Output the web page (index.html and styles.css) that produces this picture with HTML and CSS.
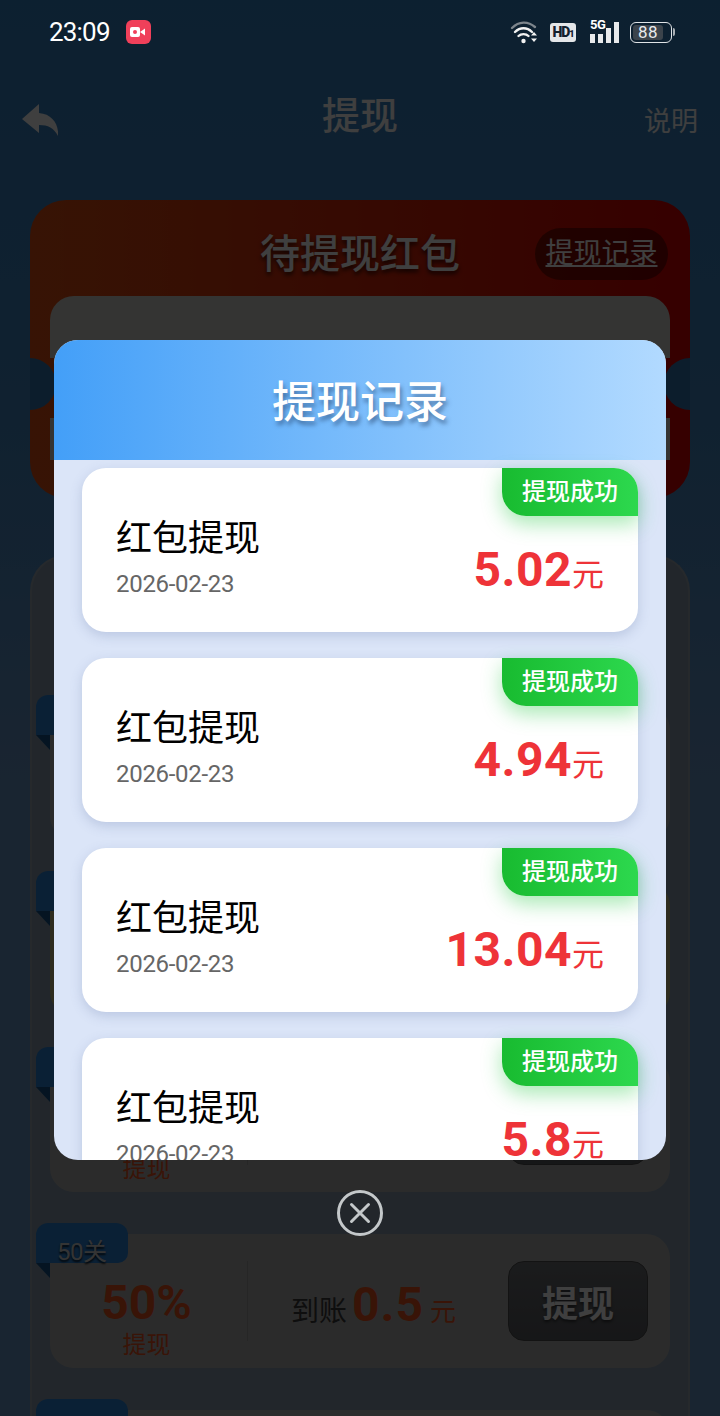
FILE: index.html
```html
<!DOCTYPE html>
<html lang="zh-CN">

<head>
    <meta charset="UTF-8">
    <meta name="viewport" content="width=device-width, initial-scale=1.0">
    <title>提现</title>
    <link rel="stylesheet" href="styles.css">
</head>

<body>
    <div class="status">
        <div class="status-left">
            <span class="time">23:09</span>
            <span class="rec">
                <svg width="16" height="12" viewBox="0 0 16 12"><rect x="0" y="1" width="10" height="10" rx="2" fill="#fff"/><path d="M10 6 15 2.5V9.5Z" fill="#fff"/><circle cx="5" cy="6" r="2" fill="#f0405a"/></svg>
            </span>
        </div>
        <div class="status-right">
            <svg class="wifi" width="30" height="24" viewBox="0 0 30 24" fill="none" stroke-linecap="round">
                <path d="M2 8C9 1 18 1 25 7" stroke="#7d858c" stroke-width="2.4"/>
                <path d="M5 12C10 7 17 7 22 12" stroke="#f2f2f2" stroke-width="2.4"/>
                <path d="M8.500 16C11 13.500 16 13.500 18.500 16" stroke="#f2f2f2" stroke-width="2.400"/>
                <circle cx="13.500" cy="21" r="2.200" fill="#f2f2f2"/>
                <path d="M24 12 27 15.500H21ZM24 22 21 18.500H27Z" fill="#f2f2f2"/>
            </svg>
            <span class="hd">HD<small>1</small></span>
            <span class="signal">
                <span class="five-g">5G</span>
                <i class="bar b1"></i><i class="bar b2"></i><i class="bar b3"></i><i class="bar b4"></i>
            </span>
            <span class="battery"><span class="level">88</span></span>
            <i class="battery-cap"></i>
        </div>
    </div>

    <div class="page">
        <nav class="nav">
            <svg class="back" width="36" height="32" viewBox="0 0 36 32"><path d="M0 15 17 0V9C30 10 37 20 36 32 32 24 26 21 17 21V29Z" fill="#e0e0e0"/></svg>
            <h1>提现</h1>
            <a class="explain">说明</a>
        </nav>

        <section class="red-card">
            <i class="notch notch-l"></i>
            <i class="notch notch-r"></i>
            <div class="red-head">
                <span></span>
                <h2>待提现红包</h2>
                <a class="record-link">提现记录</a>
            </div>
            <div class="red-panel top"></div>
            <div class="red-panel bottom"></div>
        </section>

        <section class="tiers">
            <div class="tier">
                <span class="tag">10关</span>
                <div class="percent"><b>10%</b><span>提现</span></div>
                <i class="divider"></i>
                <div class="arrive">到账<b>0.1</b><em>元</em></div>
                <button class="take">提现</button>
            </div>
            <div class="tier current">
                <span class="tag">20关</span>
                <div class="percent"><b>20%</b><span>提现</span></div>
                <i class="divider"></i>
                <div class="arrive">到账<b>0.2</b><em>元</em></div>
                <button class="take">提现</button>
            </div>
            <div class="tier">
                <span class="tag">30关</span>
                <div class="percent"><b>30%</b><span>提现</span></div>
                <i class="divider"></i>
                <div class="arrive">到账<b>0.3</b><em>元</em></div>
                <button class="take">提现</button>
            </div>
            <div class="tier">
                <span class="tag">50关</span>
                <div class="percent"><b>50%</b><span>提现</span></div>
                <i class="divider"></i>
                <div class="arrive">到账<b>0.5</b><em>元</em></div>
                <button class="take">提现</button>
            </div>
            <div class="tier">
                <span class="tag"></span>
            </div>
        </section>
    </div>

    <div class="overlay">
        <div class="modal">
            <div class="modal-head">提现记录</div>
            <div class="modal-body">
                <div class="record">
                    <span class="badge">提现成功</span>
                    <div class="record-info">
                        <p class="record-name">红包提现</p>
                        <p class="record-date">2026-02-23</p>
                    </div>
                    <div class="record-money"><b>5.02</b>元</div>
                </div>
                <div class="record">
                    <span class="badge">提现成功</span>
                    <div class="record-info">
                        <p class="record-name">红包提现</p>
                        <p class="record-date">2026-02-23</p>
                    </div>
                    <div class="record-money"><b>4.94</b>元</div>
                </div>
                <div class="record">
                    <span class="badge">提现成功</span>
                    <div class="record-info">
                        <p class="record-name">红包提现</p>
                        <p class="record-date">2026-02-23</p>
                    </div>
                    <div class="record-money"><b>13.04</b>元</div>
                </div>
                <div class="record">
                    <span class="badge">提现成功</span>
                    <div class="record-info">
                        <p class="record-name">红包提现</p>
                        <p class="record-date">2026-02-23</p>
                    </div>
                    <div class="record-money"><b>5.8</b>元</div>
                </div>
            </div>
        </div>
        <button class="close-btn">
            <svg width="46" height="46" viewBox="0 0 46 46" fill="none" stroke="#c4c8ca" stroke-width="3">
                <circle cx="23" cy="23" r="21.500"/>
                <path d="M14.500 14.500 31.500 31.500M31.500 14.500 14.500 31.500" stroke-linecap="round"/>
            </svg>
        </button>
    </div>
</body>

</html>
```

FILE: styles.css
```css
body,
html {
    margin: 0;
    padding: 0;
    overflow: hidden;
}

body {
    position: relative;
    width: 720px;
    height: 1416px;
    font-family: Roboto, "Noto Sans CJK SC", sans-serif;
}

p,
h1,
h2 {
    margin: 0;
}

/* status bar sits above the dim layer */
.status {
    position: relative;
    z-index: 2;
    height: 64px;
    display: flex;
    justify-content: space-between;
    align-items: center;
    padding: 0 45px 0 49px;
    color: #fff;
}

.status-left,
.status-right {
    display: flex;
    align-items: center;
}

.time {
    font-size: 26px;
    letter-spacing: -0.8px;
}

.rec {
    width: 25px;
    height: 24px;
    margin-left: 16px;
    border-radius: 6px;
    background-color: #f0405a;
    display: flex;
    align-items: center;
    justify-content: center;
}

.wifi {
    margin-right: 10px;
}

.hd {
    width: 26px;
    height: 19px;
    border-radius: 3px;
    background-color: #e4e6e8;
    color: #14202c;
    font-size: 14px;
    font-weight: 900;
    line-height: 19px;
    text-align: center;
    letter-spacing: -1px;
}

.hd small {
    font-size: 9px;
}

.signal {
    position: relative;
    width: 30px;
    height: 22px;
    margin-left: 14px;
    display: flex;
    align-items: flex-end;
    gap: 3px;
}

.five-g {
    position: absolute;
    top: -3px;
    left: 0;
    font-size: 13px;
    font-weight: 700;
    line-height: 13px;
    letter-spacing: -0.5px;
}

.bar {
    width: 5px;
    background-color: #e8eaec;
}

.b1 {
    height: 9px;
}

.b2 {
    height: 9px;
}

.b3 {
    height: 15px;
}

.b4 {
    height: 21px;
}

.battery {
    width: 36px;
    height: 15px;
    margin-left: 10px;
    padding: 2px;
    border: 1.500px solid #dfe3e6;
    border-radius: 6px;
    display: flex;
}

.level {
    width: 30px;
    border-radius: 3px;
    background-color: #3b434b;
    color: #e8eaec;
    font-size: 17px;
    line-height: 15px;
    text-align: center;
    letter-spacing: 0.5px;
}

.battery-cap {
    width: 2px;
    height: 8px;
    margin-left: 1px;
    border-radius: 0 2px 2px 0;
    background-color: #a9afb4;
}

/* the page behind the dialog */
.page {
    height: 1352px;
    padding: 0 30px;
    color: #e0e0e0;
}

.page::before {
    content: "";
    position: absolute;
    z-index: -1;
    top: 0;
    left: 0;
    right: 0;
    bottom: 0;
    background: linear-gradient(180deg, #2e72ab 0, #3a78ae 30%, #5c84b0 55%, #5c84b0 100%);
}

.nav {
    height: 104px;
    margin: 0 -8px;
    display: grid;
    grid-template-columns: 1fr auto 1fr;
    align-items: center;
}

.nav h1 {
    font-size: 38px;
    font-weight: 500;
    line-height: 104px;
}

.back {
    margin-top: 8px;
}

.explain {
    justify-self: end;
    margin-top: 6px;
    font-size: 27px;
}

.red-card {
    position: relative;
    height: 298px;
    margin-top: 32px;
    padding: 28px 20px 0;
    box-sizing: border-box;
    border-radius: 36px;
    background: linear-gradient(90deg, #c44712, #c00000);
    overflow: hidden;
}

.notch {
    position: absolute;
    top: 158px;
    width: 52px;
    height: 52px;
    border-radius: 50%;
    background-color: #2e6a9e;
}

.notch-l {
    left: -26px;
}

.notch-r {
    right: -26px;
}

.red-head {
    height: 52px;
    display: grid;
    grid-template-columns: 1fr auto 1fr;
    align-items: center;
}

.red-head h2 {
    margin-top: -6px;
    font-size: 40px;
    font-weight: 500;
    text-shadow: 0 3px 4px rgba(0, 0, 0, 0.7);
}

.record-link {
    justify-self: end;
    width: 133px;
    height: 52px;
    margin-right: 2px;
    border-radius: 26px;
    background-color: rgba(0, 0, 0, 0.4);
    font-size: 28px;
    line-height: 52px;
    text-align: center;
    text-decoration: underline;
}

.red-panel {
    background-color: #bcbcb6;
}

.red-panel.top {
    height: 62px;
    margin-top: 16px;
    border-radius: 24px 24px 0 0;
}

.red-panel.bottom {
    height: 42px;
    margin-top: 60px;
}

.tiers {
    height: 861px;
    margin-top: 57px;
    padding: 149px 18px 0;
    box-sizing: border-box;
    display: flex;
    flex-direction: column;
    gap: 42px;
    overflow: hidden;
    border: 2px solid #8a949e;
    border-bottom: 0;
    border-radius: 36px 36px 0 0;
    background-color: #7a8a9a;
}

.tier {
    position: relative;
    flex: none;
    height: 134px;
    display: flex;
    align-items: center;
    border-radius: 24px;
    background-color: #9c9c9c;
    color: #cc4a1c;
}

.tier.current {
    background-color: #a8a270;
}

.tag {
    position: absolute;
    top: -11px;
    left: -14px;
    width: 92px;
    height: 40px;
    padding-left: 21px;
    box-sizing: border-box;
    border-radius: 12px 12px 10px 0;
    background-color: #2674be;
    color: #bbb;
    font-size: 24px;
    line-height: 58px;
    letter-spacing: -0.5px;
    text-shadow: 0 2px 2px rgba(0, 0, 0, 0.8);
}

.tag::after {
    content: "";
    position: absolute;
    top: 40px;
    left: 0;
    border-top: 15px solid #124a7c;
    border-left: 14px solid transparent;
}

.percent {
    width: 193px;
    margin-top: 34px;
    display: flex;
    flex-direction: column;
    align-items: center;
}

.percent b {
    font-size: 48px;
    line-height: 54px;
}

.percent span {
    font-size: 24px;
    line-height: 30px;
}

.divider {
    width: 1px;
    height: 80px;
    margin-left: 4px;
    background-color: rgba(0, 0, 0, 0.12);
}

.arrive {
    flex: 1;
    margin-top: 6px;
    padding-right: 9px;
    display: flex;
    align-items: baseline;
    justify-content: center;
    color: #333;
    font-size: 28px;
}

.arrive b {
    margin: 0 6px 0 5px;
    color: #cc4a1c;
    font-size: 48px;
    letter-spacing: 1px;
}

.arrive em {
    color: #cc4a1c;
    font-size: 26px;
    font-style: normal;
}

.take {
    width: 140px;
    height: 80px;
    margin-right: 22px;
    border: 1px solid #444;
    border-radius: 16px;
    background: linear-gradient(180deg, #606266, #505256);
    color: #e0e0e0;
    font-family: inherit;
    font-size: 36px;
    font-weight: 700;
    text-shadow: 0 2px 3px rgba(0, 0, 0, 0.5);
}

/* dim layer with the dialog */
.overlay {
    position: absolute;
    z-index: 1;
    top: 0;
    left: 0;
    right: 0;
    bottom: 0;
    padding-top: 340px;
    box-sizing: border-box;
    display: flex;
    flex-direction: column;
    align-items: center;
    background-color: rgba(0, 0, 0, 0.72);
}

.modal {
    width: 612px;
    height: 820px;
    border-radius: 24px;
    overflow: hidden;
    background-color: #dbe5f8;
}

.modal-head {
    height: 120px;
    background: linear-gradient(90deg, #439ff8, #b2daff);
    color: #fff;
    font-size: 44px;
    font-weight: 500;
    line-height: 126px;
    text-align: center;
    text-shadow: 2px 4px 4px rgba(40, 70, 110, 0.55);
}

.modal-body {
    padding: 8px 28px;
    display: flex;
    flex-direction: column;
    gap: 26px;
}

.record {
    position: relative;
    flex: none;
    height: 164px;
    padding: 47px 34px 0 34px;
    box-sizing: border-box;
    display: flex;
    justify-content: space-between;
    border-radius: 24px;
    background-color: #fff;
    box-shadow: 0 4px 12px rgba(90, 110, 160, 0.25);
}

.badge {
    position: absolute;
    top: 0;
    right: 0;
    width: 136px;
    height: 48px;
    border-radius: 0 24px 0 24px;
    background: linear-gradient(90deg, #18bb30, #2dd84e);
    box-shadow: 0 8px 20px rgba(40, 200, 70, 0.4);
    color: #fff;
    font-size: 24px;
    font-weight: 500;
    line-height: 48px;
    text-align: center;
}

.record-name {
    color: #000;
    font-size: 36px;
    line-height: 48px;
}

.record-date {
    margin-top: 3px;
    color: #666;
    font-size: 24px;
    line-height: 36px;
    letter-spacing: -0.3px;
}

.record-money {
    align-self: flex-end;
    margin-bottom: 29px;
    color: #ee3338;
    font-size: 32px;
    line-height: 56px;
}

.record-money b {
    font-size: 48px;
    letter-spacing: 0.5px;
}

.close-btn {
    width: 46px;
    height: 46px;
    margin-top: 30px;
    padding: 0;
    border: 0;
    background-color: transparent;
    cursor: pointer;
}
```
